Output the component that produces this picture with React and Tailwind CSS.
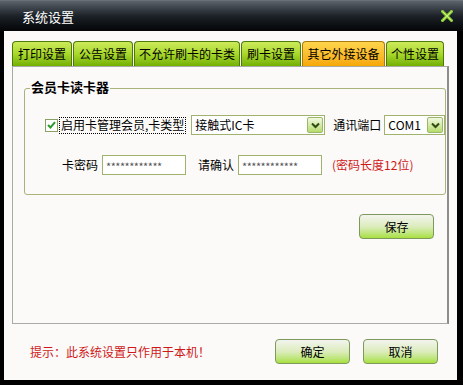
import React from 'react';

const font = { fontFamily: '"Noto Sans CJK SC", "Liberation Sans", sans-serif' };

const tabs = [
  { label: '打印设置', w: 'w-[60px]' },
  { label: '公告设置', w: 'w-[60px]' },
  { label: '不允许刷卡的卡类', w: 'w-[106px]' },
  { label: '刷卡设置', w: 'w-[60px]' },
  { label: '其它外接设备', w: 'w-[83px]', active: true },
  { label: '个性设置', w: 'w-[58px]' },
];

// little green arrow button used by the combo boxes
const DropButton = () => (
  <div className="w-[16px] h-[16px] mr-[1px] shrink-0 rounded-[2px] border border-[#9cb86a] bg-gradient-to-b from-[#f2f8e0] to-[#b6dc6a] flex items-center justify-center">
    <svg width="9" height="7" viewBox="0 0 9 7">
      <path d="M1 1.5 L4.5 5 L8 1.5" fill="none" stroke="#2f4a10" strokeWidth="2" />
    </svg>
  </div>
);

const Select = ({ value, className }) => (
  <div className={`h-[20px] shrink-0 border border-[#9fb26e] bg-white flex items-center justify-between pl-[3px] ${className}`}>
    <span className="text-[12px] leading-none text-black whitespace-nowrap">{value}</span>
    <DropButton />
  </div>
);

const PwdInput = () => (
  <div className="w-[84px] h-[20px] shrink-0 border border-[#9fb26e] bg-white flex items-center pl-[3px] overflow-hidden">
    <span className="text-[11px] leading-none text-[#555] tracking-[-0.5px] pt-[3px] whitespace-nowrap">************</span>
  </div>
);

const GreenButton = ({ children, className }) => (
  <button className={`w-[75px] h-[25px] shrink-0 rounded-[4px] border border-[#7d9a5c] bg-gradient-to-b from-[#f3f4ee] via-[#dcecbc] to-[#a9e03a] text-[12px] text-black flex items-center justify-center ${className}`}>
    {children}
  </button>
);

const App = () => {
  return (
    <div className="w-[463px] h-[385px] bg-black flex flex-col overflow-hidden select-none" style={font}>
      {/* Title bar */}
      <div className="h-[31px] shrink-0 flex items-center justify-between pl-[22px] pr-[10px] bg-gradient-to-b from-[#5c636b] via-[#1c2228] to-[#050607] border-t border-[#6b7178]">
        <span className="text-[13px] text-white leading-none">系统设置</span>
        <svg width="12" height="12" viewBox="0 0 12 12">
          <path d="M1.5 1.5 L10.5 10.5 M10.5 1.5 L1.5 10.5" stroke="#8fd03a" strokeWidth="3" strokeLinecap="square" />
          <path d="M1.5 1.5 L10.5 10.5 M10.5 1.5 L1.5 10.5" stroke="#c8f07a" strokeWidth="1" />
        </svg>
      </div>

      {/* Body */}
      <div className="ml-[4px] mr-[6px] h-[349px] bg-[#fbfaf8] pl-[8px] pt-[10px] flex flex-col">
        {/* Tabs */}
        <div className="flex gap-[1px] h-[25px] items-end">
          {tabs.map((t) => (
            <div
              key={t.label}
              className={`${t.w} h-[25px] rounded-t-[4px] border border-b-0 flex items-center justify-center text-[12px] text-black whitespace-nowrap ${
                t.active
                  ? 'border-[#a77a10] bg-gradient-to-b from-[#ffd54a] to-[#f6a800]'
                  : 'border-[#4e7a08] bg-gradient-to-b from-[#cdea5a] via-[#a8d82a] to-[#74b000]'
              }`}
            >
              {t.label}
            </div>
          ))}
        </div>

        {/* Tab panel */}
        <div className="w-[437px] h-[258px] border border-[#a9a9a9] border-r-[2px] border-r-[#8c8c8c] bg-[#fbfaf8] flex flex-col">
          {/* Group box */}
          <div className="relative ml-[11px] mt-[21px] w-[422px] h-[107px] border border-[#a8b47a] rounded-[3px] flex flex-col">
            <span className="absolute -top-[9px] left-[5px] px-[1px] bg-[#fbfaf8] text-[13px] font-bold leading-none text-black">
              会员卡读卡器
            </span>

            <div className="flex items-center mt-[26px] pl-[20px] h-[20px] whitespace-nowrap">
              <div className="w-[13px] h-[13px] shrink-0 border border-[#8aa064] bg-white flex items-center justify-center">
                <svg width="9" height="8" viewBox="0 0 9 8">
                  <path d="M1 4 L3.5 6.5 L8 1.2" fill="none" stroke="#2c9a2c" strokeWidth="2" />
                </svg>
              </div>
              <span className="ml-[1px] px-[1px] h-[17px] shrink-0 flex items-center border border-dotted border-black text-[12px] leading-none text-black">
                启用卡管理会员,卡类型
              </span>
              <Select value="接触式IC卡" className="w-[134px] ml-[5px]" />
              <span className="ml-[8px] shrink-0 text-[12px] text-black leading-none">通讯端口</span>
              <Select value="COM1" className="w-[61px] ml-[3px]" />
            </div>

            <div className="flex items-center mt-[20px] pl-[37px] h-[20px] whitespace-nowrap">
              <span className="mr-[4px] text-[12px] text-black leading-none">卡密码</span>
              <PwdInput />
              <span className="ml-[12px] mr-[4px] text-[12px] text-black leading-none">请确认</span>
              <PwdInput />
              <span className="ml-[10px] text-[12px] text-[#d01818] leading-none">(密码长度12位)</span>
            </div>
          </div>

          <div className="flex justify-end mt-[19px] pr-[13px]">
            <GreenButton>保存</GreenButton>
          </div>
        </div>

        {/* Footer */}
        <div className="flex items-center mt-[15px] h-[25px] whitespace-nowrap">
          <span className="ml-[18px] text-[12px] text-[#d01818] leading-none">提示：此系统设置只作用于本机！</span>
          <GreenButton className="ml-auto">确定</GreenButton>
          <GreenButton className="ml-[13px] mr-[19px]">取消</GreenButton>
        </div>
      </div>
    </div>
  );
};

export default App;
